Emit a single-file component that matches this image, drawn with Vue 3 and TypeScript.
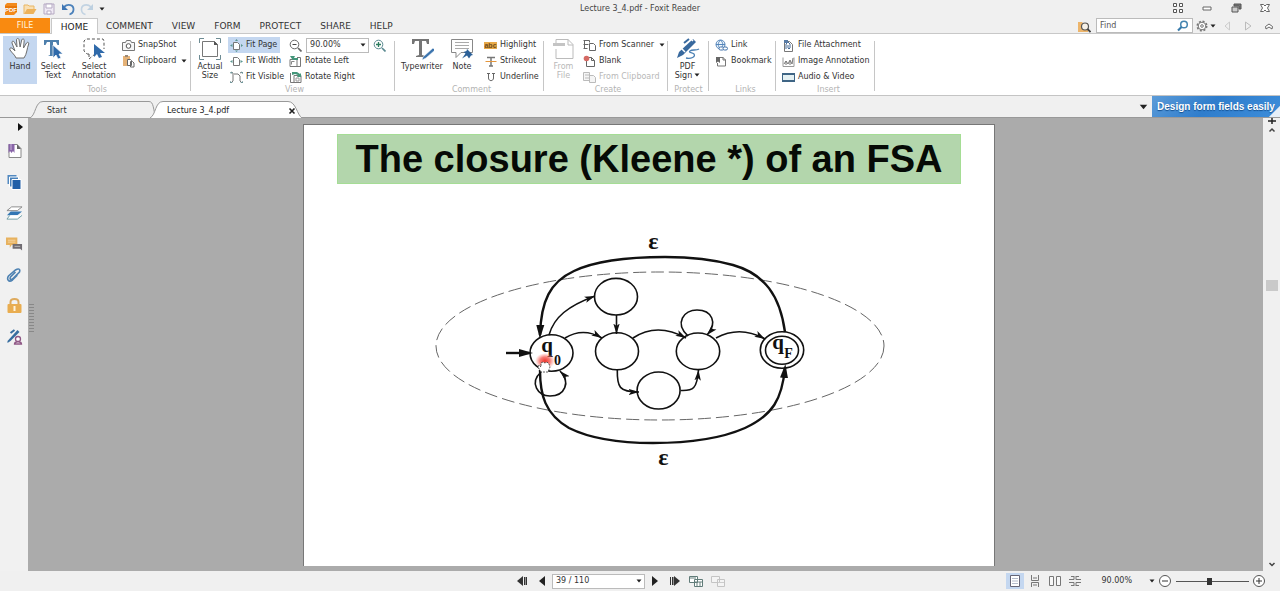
<script setup lang="ts">
import { ref } from 'vue'

interface Tool {
  label: string
  icon: string
  menu?: boolean
  active?: boolean
  disabled?: boolean
}

interface Group {
  name: string
  big: Tool[]
  small: Tool[]
}

const menus = ['HOME', 'COMMENT', 'VIEW', 'FORM', 'PROTECT', 'SHARE', 'HELP']
const activeMenu = ref('HOME')

const groups: Group[] = [
  {
    name: 'Tools',
    big: [
      { label: 'Hand', icon: 'hand', active: true },
      { label: 'Select Text', icon: 'select-text' },
      { label: 'Select Annotation', icon: 'select-annot' },
    ],
    small: [
      { label: 'SnapShot', icon: 'camera' },
      { label: 'Clipboard', icon: 'clipboard', menu: true },
    ],
  },
  {
    name: 'View',
    big: [{ label: 'Actual Size', icon: 'actual' }],
    small: [
      { label: 'Fit Page', icon: 'fit-page', active: true },
      { label: 'Fit Width', icon: 'fit-width' },
      { label: 'Fit Visible', icon: 'fit-visible' },
    ],
  },
  {
    name: 'Comment',
    big: [
      { label: 'Typewriter', icon: 'typewriter' },
      { label: 'Note', icon: 'note' },
    ],
    small: [
      { label: 'Highlight', icon: 'highlight' },
      { label: 'Strikeout', icon: 'strikeout' },
      { label: 'Underline', icon: 'underline' },
    ],
  },
  {
    name: 'Create',
    big: [{ label: 'From File', icon: 'from-file', disabled: true }],
    small: [
      { label: 'From Scanner', icon: 'scanner', menu: true },
      { label: 'Blank', icon: 'blank' },
      { label: 'From Clipboard', icon: 'from-clip', disabled: true },
    ],
  },
  { name: 'Protect', big: [{ label: 'PDF Sign', icon: 'sign', menu: true }], small: [] },
  {
    name: 'Links',
    big: [],
    small: [
      { label: 'Link', icon: 'link' },
      { label: 'Bookmark', icon: 'bookmark' },
    ],
  },
  {
    name: 'Insert',
    big: [],
    small: [
      { label: 'File Attachment', icon: 'attach' },
      { label: 'Image Annotation', icon: 'image' },
      { label: 'Audio & Video', icon: 'video' },
    ],
  },
]

const quick = [
  { label: 'Foxit Reader', icon: 'logo' },
  { label: 'Open', icon: 'open' },
  { label: 'Save', icon: 'save' },
  { label: 'Undo', icon: 'undo' },
  { label: 'Redo', icon: 'redo' },
]

const windowButtons = [
  { label: 'Layout', icon: 'grid' },
  { label: 'Minimize', icon: 'minimize' },
  { label: 'Restore', icon: 'restore' },
  { label: 'Close', icon: 'close' },
]

const panels = [
  { label: 'Bookmarks', icon: 'p-bookmark' },
  { label: 'Pages', icon: 'p-pages' },
  { label: 'Layers', icon: 'p-layers' },
  { label: 'Comments', icon: 'p-comments' },
  { label: 'Attachments', icon: 'p-clip' },
  { label: 'Security', icon: 'p-lock' },
  { label: 'Signatures', icon: 'p-sign' },
]

const layouts = [
  { label: 'Single page', icon: 'l-single' },
  { label: 'Continuous', icon: 'l-cont' },
  { label: 'Facing', icon: 'l-facing' },
  { label: 'Continuous facing', icon: 'l-cfacing' },
]

const search = ref('')
const zoom = ref(45)
</script>

<template>
  <svg class="sprite" aria-hidden="true">
    <defs>
      <symbol id="logo" viewBox="0 0 14 14"><path d="M3 1h10v9l-3 3H1V3z" fill="#f28a1c" /><path d="M1 4h12v6H1z" fill="#e87607" /><text x="7" y="9.5" font-size="6" font-weight="bold" font-family="Liberation Sans" fill="#fff" text-anchor="middle">PDF</text></symbol>
      <symbol id="open" viewBox="0 0 14 14"><path d="M1 12V3h4l1 1h5v3" fill="#f9dfb3" stroke="#e9b765" /><path d="M1 12l3-5h9.500l-3 5z" fill="#edb25b" /></symbol>
      <symbol id="save" viewBox="0 0 14 14"><path d="M2 2h10v10H2z" fill="#efe9f4" stroke="#b5a9c2" /><path d="M4 2h6v4H4zM5 9h4v3H5z" fill="#fff" stroke="#b5a9c2" /></symbol>
      <symbol id="undo" viewBox="0 0 14 14"><path d="M3 5c4-4 10-2 9.500 3-.3 2.500-2 4-4 4.500" fill="none" stroke="#4d82bb" stroke-width="1.800" /><path d="M1 2v6h6z" fill="#3f76b4" /></symbol>
      <symbol id="redo" viewBox="0 0 14 14"><path d="M11 5C7 1 1 3 1.500 8c.3 2.500 2 4 4 4.500" fill="none" stroke="#c2d3e2" stroke-width="1.600" /><path d="M13 2v6H7z" fill="#bdd0e0" /></symbol>
      <symbol id="grid" viewBox="0 0 12 12"><path d="M1.500 1.500h3v3h-3zM7.500 1.500h3v3h-3zM1.500 7.500h3v3h-3zM7.500 7.500h3v3h-3z" fill="#fff" stroke="#555" /></symbol>
      <symbol id="minimize" viewBox="0 0 12 12"><path d="M2 5h8v3H2z" fill="#fff" stroke="#666" /></symbol>
      <symbol id="restore" viewBox="0 0 12 12"><path d="M4 2h7v5H9V4H4z" fill="#777" stroke="#555" /><path d="M2 5h6v5H2z" fill="#ccc" stroke="#555" /></symbol>
      <symbol id="close" viewBox="0 0 12 12"><path d="M1.500 2.500h3L6 4l1.500-1.500h3L8.500 6l2 3.500h-3L6 8 4.500 9.500h-3l2-3.500z" fill="#fff" stroke="#666" /></symbol>
      <symbol id="hand" viewBox="0 0 24 24"><path d="M8 21c-1-3-4-5-6-8-1-2 1-3 3-1l2 2-3-8c-.6-2 1.700-2.500 2.400-.8L9 10 8.500 3c0-2 2.400-2 2.600 0l1 7 1.600-7c.5-1.800 2.700-1.300 2.500.5L15.500 11l3-5c1-1.500 2.800-.5 2.200 1-1.700 4-1.700 10-4.700 14z" fill="#fff" stroke="#6e6e6e" /></symbol>
      <symbol id="select-text" viewBox="0 0 24 24"><path d="M3 3h15v5h-1.500L15 5h-3v13l2 1H7l2-1V5H6L4.500 8H3z" fill="#4d7fac" /><path d="M12 8v13l3-3 2 4 3-1-2-4h4z" fill="#2f6aaa" stroke="#fff" stroke-width=".7" /></symbol>
      <symbol id="select-annot" viewBox="0 0 24 24"><path d="M7 17H5l-3-3V4l2-2h17l1 2v8M7 17v5l6-5" fill="none" stroke="#555" stroke-dasharray="3 2" /><path d="M12 7v13l3-3 2 4 3-1-2-4h5z" fill="#2f6aaa" /></symbol>
      <symbol id="camera" viewBox="0 0 13 13"><path d="M.5 3.500h3l1-2h4l1 2h3v8H.5z" fill="#f6f6f6" stroke="#777" /><circle cx="6.500" cy="7" r="2.300" fill="#fff" stroke="#555" /></symbol>
      <symbol id="clipboard" viewBox="0 0 13 13"><path d="M1 1h7v10H1z" fill="#e5b277" /><path d="M3 0h3v2H3z" fill="#987" /><path d="M5.500 4.500h3l1 1v5h-4zM8.500 6.500h2l1.500 1.500v4H8.500z" fill="#fff" stroke="#666" /></symbol>
      <symbol id="actual" viewBox="0 0 24 24"><path d="M1.500 6V1.500H6M18 1.500h4.500V6M22.500 18v4.500H18M6 22.500H1.500V18" fill="none" stroke="#6d8b93" /><path d="M4.500 4.500h12l3 3v12h-15z" fill="#fff" stroke="#777" /><path d="M16 4v4h4z" fill="#555" /></symbol>
      <symbol id="fit-page" viewBox="0 0 13 13"><path d="M3.500 3.500h4l2 2v5h-6z" fill="#fff" stroke="#777" /><path d="M5 2l1.500-2L8 2zM5 11.500h3L6.500 13zM2.500 5v3L0 6.500zM11 5v3l2-1.500z" fill="#5b9791" /></symbol>
      <symbol id="fit-width" viewBox="0 0 13 13"><path d="M3.500 2.500h4l2 2v6h-6z" fill="#fff" stroke="#777" /><path d="M2.500 5v3L0 6.500zM10.500 5v3l2.500-1.500z" fill="#5b9791" /></symbol>
      <symbol id="fit-visible" viewBox="0 0 13 13"><path d="M1 1l2 1v8l-2 2M12 1l-2 1M12 12l-2-2V5L8 3H4" fill="none" stroke="#777" /><path d="M0 1h3L1 3zM10 1h3v2zM0 12v-2l3 2zM13 12v-2l-3 2z" fill="#71969a" /></symbol>
      <symbol id="zoom-out" viewBox="0 0 13 13"><circle cx="5.500" cy="5.500" r="4.300" fill="#fff" stroke="#666" /><path d="M9 9l3.500 3.500" stroke="#666" stroke-width="1.700" /><path d="M3.500 5.500h4" stroke="#444" /></symbol>
      <symbol id="zoom-in" viewBox="0 0 13 13"><circle cx="5.500" cy="5.500" r="4.300" fill="#fff" stroke="#5b8a91" /><path d="M9 9l3.500 3.500" stroke="#5b8a91" stroke-width="1.700" /><path d="M3 5.500h5M5.500 3v5" stroke="#2b7d5e" stroke-width="1.300" /></symbol>
      <symbol id="rot-left" viewBox="0 0 13 13"><path d="M1 4.500h7v7H1zM8 2.500h3.500v9H8" fill="#fff" stroke="#777" /><path d="M2.500 9.500V6.500h3" fill="none" stroke="#888" /><path d="M1 1h5l-1 2h4v2H4L3 4z" fill="#44967a" /></symbol>
      <symbol id="rot-right" viewBox="0 0 13 13"><path d="M1.500 2v9.500H5M5 4.500h7v7H5z" fill="#fff" stroke="#777" /><path d="M7 10V7h3v3z" fill="none" stroke="#999" /><path d="M3 1h5l3 2 1-1v4H8l1-2-3-1-3 1z" fill="#44967a" /></symbol>
      <symbol id="typewriter" viewBox="0 0 24 24"><path d="M2 2h17v5h-2l-1-3h-4v14l3 1v1H6v-1l3-1V4H5L4 7H2z" fill="#757575" /><path d="M13 20l10-9 2 2-9 8-4 2z" fill="#3b74ae" stroke="#fff" stroke-width=".5" /></symbol>
      <symbol id="note" viewBox="0 0 24 24"><path d="M1.500 2.500h21v13H11l-5 5v-5H1.500z" fill="#fff" stroke="#888" /><path d="M5 5.500h14M5 8.500h14M5 11.500h14" stroke="#aaa" /><path d="M17 12l6 6-2 .5-2 3-2-3-5 3 3.500-5-2-1.500 3-1z" fill="#2d6198" /></symbol>
      <symbol id="highlight" viewBox="0 0 13 13"><path d="M0 3h13v7H0z" fill="#e8aa49" /><text x="6.500" y="9" font-size="7" font-family="Liberation Sans" font-weight="bold" fill="#704c1b" text-anchor="middle">abc</text></symbol>
      <symbol id="strikeout" viewBox="0 0 13 13"><path d="M3 2.500h8M7 2v9M5 11h4" stroke="#777" stroke-width="1.500" fill="none" /><path d="M1.500 6.500h11" stroke="#e5963c" /></symbol>
      <symbol id="underline" viewBox="0 0 13 13"><path d="M4.500 2v5c0 3.500 5 3.500 5 0V2M3 2.500h3M8 2.500h3" stroke="#666" fill="none" /></symbol>
      <symbol id="from-file" viewBox="0 0 24 24"><path d="M5 8V2.500h12l5 5v14H5V12" fill="#fff" stroke="#bbb" /><path d="M17 2v6h5" fill="none" stroke="#bbb" /><path d="M2 6h12v3H2z" fill="#c4c4c4" /></symbol>
      <symbol id="scanner" viewBox="0 0 13 13"><path d="M.5 1.500h6v2M.5 5.500h5M.5 9.500h4M1.500 1.500v8" fill="none" stroke="#666" /><path d="M6.500 4.500h4l2 2v5h-6z" fill="#fff" stroke="#666" /></symbol>
      <symbol id="blank" viewBox="0 0 13 13"><path d="M3.500 2.500h5l3 3v6h-8z" fill="#fff" stroke="#666" /><path d="M8.500 2.500v3h3" fill="none" stroke="#666" /><circle cx="3.500" cy="3.500" r="2.800" fill="#d56a64" /></symbol>
      <symbol id="from-clip" viewBox="0 0 13 13"><path d="M.5 1.500h6v8h-6zM6.500 4.500h4l2 2v5h-6z" fill="#f5f5f5" stroke="#bbb" /><path d="M2 4h4M2 7h4" stroke="#bbb" /></symbol>
      <symbol id="sign" viewBox="0 0 24 24"><path d="M1 21l2-6L17 2l3 3L7 18z" fill="#38699e" /><path d="M8 5l6-4 3 3M5 11l4 4" stroke="#fff" stroke-width="1.500" fill="none" /><path d="M8 6l5-4" stroke="#38699e" stroke-width="2" /><path d="M10 21c5 1 10-1 8-4-2-2-6-1-4-3 2-2 6 0 9-2" fill="none" stroke="#4a7fb3" stroke-width="1.300" /></symbol>
      <symbol id="link" viewBox="0 0 13 13"><circle cx="5.500" cy="5.500" r="4.500" fill="#eff6fc" stroke="#5586bb" /><path d="M1 5.500h9M5.500 1c-3 3-3 6 0 9M5.500 1c3 3 3 6 0 9" fill="none" stroke="#5586bb" /><rect x="4" y="8" width="5" height="3" rx="1.500" fill="#fff" stroke="#4172aa" /><rect x="8" y="8" width="4.500" height="3" rx="1.500" fill="#fff" stroke="#4172aa" /></symbol>
      <symbol id="bookmark" viewBox="0 0 13 13"><path d="M5 2.500h3l2.500 2.500v6h-8V8" fill="#fff" stroke="#777" /><path d="M1 2h4v6L3 6.500 1 8z" fill="#666" /><path d="M8 2v3h3" fill="none" stroke="#777" /></symbol>
      <symbol id="attach" viewBox="0 0 13 13"><path d="M2.500 2.500h5l3 3v7h-8z" fill="#fff" stroke="#777" /><path d="M4 10V5l2-2 2 2v4l-1 1-1-1V6" fill="none" stroke="#476c99" /><path d="M2 1h4v3H2z" fill="#587ba5" /></symbol>
      <symbol id="image" viewBox="0 0 13 13"><path d="M1 2.500v9h11v-9" fill="#fff" stroke="#999" /><path d="M2 9l2-3 2 3 2-4 2 4 1-6M4 6v4M8 6v4" stroke="#777" fill="none" /></symbol>
      <symbol id="video" viewBox="0 0 13 13"><path d="M0 2h13v9H0z" fill="#3f6585" /><path d="M1 4h11v5H1z" fill="#e5f1f3" /></symbol>
      <symbol id="find-folder" viewBox="0 0 14 14"><path d="M1 3h4l1 1h5v9H1z" fill="#edb56b" /><circle cx="8" cy="7.500" r="3.500" fill="#f6f1e8" stroke="#555" stroke-width="1.200" /><path d="M10.500 10l3 3" stroke="#444" stroke-width="1.800" /></symbol>
      <symbol id="magnify" viewBox="0 0 12 12"><circle cx="7" cy="4.500" r="3.300" fill="#fff" stroke="#4585b0" stroke-width="1.500" /><path d="M4.500 7L1 10.500" stroke="#377aab" stroke-width="2.200" /></symbol>
      <symbol id="gear" viewBox="0 0 12 12"><circle cx="6" cy="6" r="4.700" fill="none" stroke="#777" stroke-width="1.600" stroke-dasharray="2 1.690" /><circle cx="6" cy="6" r="3.800" fill="#fff" stroke="#777" /><circle cx="6" cy="6" r="1.300" fill="none" stroke="#777" /></symbol>
      <symbol id="prev" viewBox="0 0 12 12"><path d="M8.500 2v8L4 6z" fill="none" stroke="#ccc" /></symbol>
      <symbol id="next" viewBox="0 0 12 12"><path d="M3.500 2v8L9 6z" fill="none" stroke="#bbb" /></symbol>
      <symbol id="collapse" viewBox="0 0 12 12"><path d="M3 9L2.500 6.500 6 4l3.500 2.500L9 9 6 7z" fill="#fff" stroke="#666" /></symbol>
      <symbol id="down" viewBox="0 0 6 4"><path d="M.5.500h5L3 3.500z" fill="#222" /></symbol>
      <symbol id="x" viewBox="0 0 8 8"><path d="M1.500 1.500l5 5M6.500 1.500l-5 5" stroke="#222" stroke-width="1.600" /></symbol>
      <symbol id="p-bookmark" viewBox="0 0 16 16"><path d="M2.500 1.500h8l4 4v9h-12z" fill="#fff" stroke="#888" /><path d="M10.500 1v5h4z" fill="#666" /><path d="M2 1h6v9L6.500 8 5 10 3.500 8 2 10z" fill="#8864a8" /><path d="M4 1h1v6H4z" fill="#c7b4d8" /></symbol>
      <symbol id="p-pages" viewBox="0 0 16 16"><path d="M1 1h9v9H1z" fill="#5289c0" /><path d="M3 3h9v10H3z" fill="#4780ba" stroke="#fff" /><path d="M5.500 5.500h9v10h-9z" fill="#205fa8" stroke="#fff" /></symbol>
      <symbol id="p-layers" viewBox="0 0 18 16"><path d="M6 1.500h11l-5 4H1z" fill="#fff" stroke="#888" /><path d="M5 6.500h12l-5 4H1z" fill="#3377b4" /><path d="M4 10.500L1 14.500h11l5-4" fill="#fff" stroke="#6c9ca3" /></symbol>
      <symbol id="p-comments" viewBox="0 0 18 16"><path d="M0 1h12v8H6l-2 3V9H0z" fill="#e7b25f" /><path d="M2 4h8M2 6h8" stroke="#f6d7a3" /><path d="M7 8h10v7l-2-2H7z" fill="#706c72" /><path d="M9 10.500h6" stroke="#bbb" /></symbol>
      <symbol id="p-clip" viewBox="0 0 16 16"><path d="M9 5l-5 5c-1 2 0 3 2 2l7-7c1-3-1-4-4-2L2 9c-2 3 0 7 4 4l5-5" fill="none" stroke="#4e82b2" stroke-width="1.600" /></symbol>
      <symbol id="p-lock" viewBox="0 0 16 16"><path d="M4 7V4c0-4 8-4 8 0v3" fill="none" stroke="#deaa5d" stroke-width="2" /><rect x="1" y="6" width="14" height="9" rx="1" fill="#e9ad50" /><path d="M7 8h2v5H7z" fill="#fff3dc" /></symbol>
      <symbol id="p-sign" viewBox="0 0 16 16"><path d="M1 12L11 1l2 2-9 9-3 2z" fill="#376d9f" /><path d="M4 4l4-3" stroke="#376d9f" stroke-width="2" /><circle cx="11.500" cy="10" r="2.500" fill="#fff" stroke="#8e5684" stroke-width="1.300" /><path d="M8 15c0-3 7-3 7 0z" fill="#fff" stroke="#8e5684" stroke-width="1.300" /></symbol>
      <symbol id="first" viewBox="0 0 12 12"><path d="M7 1v10L1 6z" fill="#333" /><path d="M8 2h1.500v8H8zM10 2h1v8h-1z" fill="#333" /></symbol>
      <symbol id="back" viewBox="0 0 12 12"><path d="M9 1v10L3 6z" fill="#222" /></symbol>
      <symbol id="forward" viewBox="0 0 12 12"><path d="M3 1v10l6-5z" fill="#222" /></symbol>
      <symbol id="last" viewBox="0 0 12 12"><path d="M5 1v10l6-5z" fill="#333" /><path d="M1 2h1v8H1zM3 2h1.500v8H3z" fill="#333" /></symbol>
      <symbol id="view-prev" viewBox="0 0 14 12"><path d="M.5 1.500h8v6h-8zM5.500 4.500h8v7h-8z" fill="#fff" stroke="#607b78" /><path d="M6 7h7M8 7v4M11 7v4M1 3h6" stroke="#68817f" /></symbol>
      <symbol id="view-next" viewBox="0 0 14 12"><path d="M.5 1.500h8v6h-8zM6.500 4.500h7v7h-7z" fill="#f4f4f4" stroke="#c4c4c4" /><path d="M7 7.500h6" stroke="#ccc" /></symbol>
      <symbol id="l-single" viewBox="0 0 14 14"><path d="M2.500 1.500h9v11h-9z" fill="#fff" stroke="#667" /><path d="M4 4.500h6M4 7h6M4 9.500h6" stroke="#b5bccb" /></symbol>
      <symbol id="l-cont" viewBox="0 0 14 14"><path d="M3.500 1v5.500h7V1M3.500 13V8.500h7V13M5 4h4M5 11h4" fill="none" stroke="#777" /></symbol>
      <symbol id="l-facing" viewBox="0 0 14 14"><path d="M1.500 2.500h4v9h-4zM8.500 2.500h4v9h-4z" fill="#f8f8f8" stroke="#777" /></symbol>
      <symbol id="l-cfacing" viewBox="0 0 14 14"><path d="M1 5.500h5V2M13 5.500H8V2M1 8.500h5V12M13 8.500H8V12M3 2.500h3M8 2.500h3M3 11.500h3M8 11.500h3" fill="none" stroke="#777" /></symbol>
      <symbol id="minus-c" viewBox="0 0 14 14"><circle cx="7" cy="7" r="5.500" fill="#fff" stroke="#555" /><path d="M4 7h6" stroke="#333" /></symbol>
      <symbol id="plus-c" viewBox="0 0 14 14"><circle cx="7" cy="7" r="5.500" fill="#fff" stroke="#555" /><path d="M4 7h6M7 4v6" stroke="#333" /></symbol>
    </defs>
  </svg>

  <div class="app">
    <header class="titlebar">
      <div class="quick">
        <button v-for="q in quick" :key="q.icon" :aria-label="q.label"><svg class="i14"><use :href="'#' + q.icon" /></svg></button>
        <button aria-label="Customize"><svg class="caret"><use href="#down" /></svg></button>
      </div>
      <div class="title">Lecture 3_4.pdf - Foxit Reader</div>
      <div class="window">
        <button v-for="w in windowButtons" :key="w.icon" :aria-label="w.label"><svg class="i12"><use :href="'#' + w.icon" /></svg></button>
      </div>
    </header>

    <nav class="menubar">
      <button class="file">FILE</button>
      <button v-for="m in menus" :key="m" class="menu" :class="{ on: m === activeMenu }" @click="activeMenu = m">{{ m }}</button>
      <div class="find">
        <button aria-label="Search folder"><svg class="i14"><use href="#find-folder" /></svg></button>
        <label class="findbox">
          <input v-model="search" type="text" placeholder="Find" aria-label="Find" />
          <svg class="i12"><use href="#magnify" /></svg>
        </label>
        <button class="gear" aria-label="Settings"><svg class="i12"><use href="#gear" /></svg><svg class="caret"><use href="#down" /></svg></button>
        <button aria-label="Previous"><svg class="i12"><use href="#prev" /></svg></button>
        <button aria-label="Next"><svg class="i12"><use href="#next" /></svg></button>
        <button aria-label="Collapse ribbon"><svg class="i12"><use href="#collapse" /></svg></button>
      </div>
    </nav>

    <section class="ribbon">
      <div v-for="g in groups" :key="g.name" class="group" :class="g.name.toLowerCase()">
        <div class="tools-row">
          <button v-for="b in g.big" :key="b.label" class="big" :class="[b.icon, { active: b.active }]" :disabled="b.disabled">
            <svg class="i24"><use :href="'#' + b.icon" /></svg>
            <span>{{ b.label }}<svg v-if="b.menu" class="caret"><use href="#down" /></svg></span>
          </button>
          <div v-if="g.small.length" class="col">
            <button v-for="s in g.small" :key="s.label" class="small" :class="{ active: s.active }" :disabled="s.disabled">
              <svg class="i13"><use :href="'#' + s.icon" /></svg>{{ s.label }}<svg v-if="s.menu" class="caret"><use href="#down" /></svg>
            </button>
          </div>
          <div v-if="g.name === 'View'" class="col zoomcol">
            <div class="zoomrow">
              <button aria-label="Zoom out"><svg class="i13"><use href="#zoom-out" /></svg></button>
              <div class="combo">
                <select aria-label="Zoom level"><option>90.00%</option></select>
                <svg class="caret"><use href="#down" /></svg>
              </div>
              <button aria-label="Zoom in"><svg class="i13"><use href="#zoom-in" /></svg></button>
            </div>
            <button class="small"><svg class="i13"><use href="#rot-left" /></svg>Rotate Left</button>
            <button class="small"><svg class="i13"><use href="#rot-right" /></svg>Rotate Right</button>
          </div>
        </div>
        <div class="gname">{{ g.name }}</div>
      </div>
    </section>

    <div class="doctabs">
      <button class="doctab">
        <svg class="shape" viewBox="0 0 126 17"><path d="M0 17C6 14 5 .5 13 .5H119C124 .5 123 9 126 17" fill="#f0f0f0" stroke="#999" /></svg>
        <span>Start</span>
      </button>
      <div class="doctab current">
        <svg class="shape" viewBox="0 0 152 17"><path d="M0 17C6 14 5 .5 13 .5H138C146 .5 147 14 152 17" fill="#fff" stroke="#999" /></svg>
        <span>Lecture 3_4.pdf</span>
        <button aria-label="Close tab"><svg class="i8"><use href="#x" /></svg></button>
      </div>
      <button class="tablist" aria-label="Open tabs"><svg class="tri"><use href="#down" /></svg></button>
      <a class="promo" href="#forms">Design form fields easily</a>
    </div>

    <main class="work">
      <aside class="side">
        <button class="expand" aria-label="Expand panel"><svg viewBox="0 0 5 8"><path d="M0 0v8l5-4z" fill="#111" /></svg></button>
        <button v-for="p in panels" :key="p.icon" class="panel" :aria-label="p.label"><svg><use :href="'#' + p.icon" /></svg></button>
      </aside>
      <div class="gutter"><i></i></div>
      <div class="canvas">
        <article class="page">
          <h1>The closure (Kleene *) of an FSA</h1>
          <svg class="diagram" viewBox="303 183 692 382" role="img" aria-label="Finite state automaton with epsilon transitions">
            <defs>
              <radialGradient id="spot"><stop offset="0" stop-color="#f0352c" /><stop offset=".5" stop-color="#f4655d" stop-opacity=".85" /><stop offset="1" stop-color="#ff8a80" stop-opacity="0" /></radialGradient>
              <marker id="head" viewBox="0 0 11 8" refX="10.500" refY="4" markerWidth="11" markerHeight="8" markerUnits="userSpaceOnUse" orient="auto"><path d="M0 .8L10.500 4 0 7.200 2.500 4z" fill="#111" /></marker>
              <marker id="bighead" viewBox="0 0 14 9" refX="10" refY="4.500" markerWidth="14" markerHeight="9" markerUnits="userSpaceOnUse" orient="auto"><path d="M0 .5L14 4.500 0 8.500z" fill="#111" /></marker>
            </defs>
            <ellipse cx="660" cy="345" rx="224" ry="74" fill="none" stroke="#666" stroke-width="1" stroke-dasharray="13 5" />
            <g fill="none" stroke="#111" stroke-width="1.600">
              <ellipse cx="551.500" cy="352" rx="21.500" ry="18.300" />
              <ellipse cx="616" cy="295.700" rx="21.500" ry="18.300" />
              <ellipse cx="617" cy="350.200" rx="21.500" ry="18.500" />
              <ellipse cx="658.600" cy="389.500" rx="21.500" ry="18.500" />
              <ellipse cx="698" cy="350.300" rx="21.700" ry="18.300" />
              <ellipse cx="782" cy="349" rx="21.700" ry="18.300" />
              <ellipse cx="782" cy="349.300" rx="16.500" ry="14" />
              <g marker-end="url(#head)">
                <path d="M549 334C554 316 568 305 595 295" />
                <path d="M565 337Q583 326 602 337" />
                <path d="M616.500 314V333" />
                <path d="M633 337Q657 321 686 337" />
                <path d="M716 337Q740 324 765 338" />
                <path d="M617.300 369C617 386 619 391 639 391" />
                <path d="M681 389.500C693 390 697 388 698.500 369" />
                <path d="M688 335C674 322 684 309 697 309C712 309 718 322 707 334" />
                <path d="M541 371C529 382 538 395 550 395C565 395 571 381 560 370" />
              </g>
            </g>
            <g fill="none" stroke="#111" stroke-width="2.400" marker-end="url(#bighead)">
              <path d="M785 331C780 295 765 273 733 264C710 257.500 690 256 665 256C625 256 595 260 574 270C550 281 541 300 540 334" />
              <path d="M540 369C540 394 545 413 569 427C591 438 620 442 653 442C690 442 720 438 745 427C773 414 782 398 785 367" />
              <path d="M506 352H529" />
            </g>
            <g font-family="Liberation Serif, serif" font-weight="bold" fill="#111" text-anchor="middle">
              <text x="653.500" y="248" font-size="24">ε</text>
              <text x="663.500" y="464" font-size="24">ε</text>
              <text x="547" y="351" font-size="21">q</text>
              <text x="557.500" y="364" font-size="14">0</text>
              <text x="778" y="348" font-size="21">q</text>
              <text x="788.500" y="357" font-size="14">F</text>
            </g>
            <ellipse cx="545" cy="360" rx="10" ry="8" fill="url(#spot)" />
            <path d="M541 371l-3-5 1-2 2 2v-4l2-1 2 1 2-1 2 2 1 3-2 5z" fill="#fff" stroke="#333" stroke-width=".8" stroke-dasharray="2 1" />
          </svg>
        </article>
      </div>
      <div class="scroll">
        <svg class="split" viewBox="0 0 10 16"><path d="M1 3h8M5 0v6" stroke="#222" stroke-width="1.500" /><path d="M2.500 13.500L5 11l2.500 2.500" fill="none" stroke="#444" stroke-width="1.500" /></svg>
        <div class="track"><div class="thumb"></div></div>
        <svg class="end" viewBox="0 0 10 6"><path d="M2.500 1L5 3.500 7.500 1" fill="none" stroke="#444" stroke-width="1.500" /></svg>
      </div>
    </main>

    <footer class="status">
      <div class="pager">
        <button aria-label="First page"><svg class="i12"><use href="#first" /></svg></button>
        <button aria-label="Previous page"><svg class="i12"><use href="#back" /></svg></button>
        <div class="combo pagecombo">
          <select aria-label="Page"><option>39 / 110</option></select>
          <svg class="caret"><use href="#down" /></svg>
        </div>
        <button aria-label="Next page"><svg class="i12"><use href="#forward" /></svg></button>
        <button aria-label="Last page"><svg class="i12"><use href="#last" /></svg></button>
        <button aria-label="Previous view"><svg class="i14"><use href="#view-prev" /></svg></button>
        <button aria-label="Next view"><svg class="i14"><use href="#view-next" /></svg></button>
      </div>
      <div class="right">
        <button v-for="(l, i) in layouts" :key="l.icon" class="layout" :class="{ active: i === 0 }" :aria-label="l.label"><svg class="i14"><use :href="'#' + l.icon" /></svg></button>
        <button class="percent">90.00%<svg class="caret"><use href="#down" /></svg></button>
        <button aria-label="Zoom out"><svg class="i14"><use href="#minus-c" /></svg></button>
        <input v-model="zoom" class="slider" type="range" min="0" max="100" aria-label="Zoom" />
        <button aria-label="Zoom in"><svg class="i14"><use href="#plus-c" /></svg></button>
      </div>
    </footer>
  </div>
</template>

<style>
body {
  margin: 0;
  overflow: hidden;
}
</style>

<style scoped>
.sprite {
  position: absolute;
  width: 0;
  height: 0;
}
.app {
  display: flex;
  flex-direction: column;
  height: 100vh;
  background: #f0f0f0;
  color: #333;
  font: 8px/10px "DejaVu Sans", sans-serif;
}
button {
  display: flex;
  align-items: center;
  justify-content: center;
  box-sizing: border-box;
  padding: 0;
  border: 0;
  background: none;
  color: inherit;
  font: inherit;
}
svg {
  display: block;
  flex: none;
}
.i8 { width: 8px; height: 8px; }
.i12 { width: 12px; height: 12px; }
.i13 { width: 13px; height: 13px; }
.i14 { width: 14px; height: 14px; }
.i24 { width: 24px; height: 24px; }
.caret { width: 6px; height: 4px; }

.titlebar {
  display: grid;
  grid-template-columns: 1fr auto 1fr;
  align-items: center;
  height: 18px;
}
.quick {
  display: flex;
  gap: 5px;
  padding-left: 4px;
}
.title {
  color: #444;
}
.window {
  display: flex;
  justify-content: flex-end;
  gap: 17px;
  padding: 0 9px 3px 0;
}

.menubar {
  display: flex;
  align-items: stretch;
  box-sizing: border-box;
  gap: 1px;
  height: 16px;
  font-size: 9px;
  border-bottom: 1px solid #c8c8c8;
}
.file {
  width: 50px;
  background: #f98a10;
  color: #fff4df;
  font-size: 8px;
}
.menu {
  padding: 0 9px;
}
.menu.on {
  width: 47px;
  margin: 0 -2px -1px 0;
  padding: 0;
  background: #fff;
  border: 1px solid #c8c8c8;
  border-bottom: 0;
  color: #222;
}
.find {
  display: flex;
  align-items: center;
  gap: 9px;
  margin-left: auto;
  padding-right: 5px;
}
.findbox {
  display: flex;
  align-items: center;
  box-sizing: border-box;
  width: 97px;
  height: 15px;
  margin-left: -4px;
  padding: 0 3px;
  background: #fff;
  border: 1px solid #bbb;
}
.findbox input {
  flex: 1;
  min-width: 0;
  padding: 0;
  border: 0;
  outline: 0;
  background: none;
  font: 8px/10px "DejaVu Sans", sans-serif;
}
.findbox input::placeholder {
  color: #555;
}
.gear {
  gap: 2px;
  margin: 0 -4px 0 -6px;
}

.ribbon {
  display: flex;
  box-sizing: border-box;
  height: 62px;
  background: #fff;
  border-bottom: 1px solid #c4c4c4;
}
.group {
  display: flex;
  flex-direction: column;
  box-sizing: border-box;
  padding-top: 2px;
  background: linear-gradient(#c6c6c6, #c6c6c6) right 7px / 1px 50px no-repeat;
}
.tools-row {
  display: flex;
  height: 50px;
}
.col {
  padding-top: 1px;
}
.gname {
  color: #b3b3b3;
  line-height: 10px;
  text-align: center;
}
.tools { width: 191px; padding-left: 3px; }
.view { width: 204px; padding-left: 3px; }
.comment { width: 149px; padding-left: 4px; }
.create { width: 124px; padding-left: 4px; }
.protect { width: 41px; }
.links { width: 67px; padding-left: 6px; }
.insert { width: 99px; padding-left: 6px; }
.big {
  flex-direction: column;
  justify-content: flex-start;
  width: 32px;
  height: 48px;
  padding-top: 1px;
  gap: 1px;
  line-height: 9px;
}
.big span .caret {
  display: inline-block;
  margin: 0 0 1px 2px;
}
.big.hand { width: 34px; }
.big.select-annot { width: 50px; margin-right: 3px; }
.big.typewriter { width: 46px; }
.big.note { width: 34px; margin-right: 5px; }
.big.from-file { margin-right: 4px; }
.big.sign { width: 39px; padding: 1px 5px 0; }
.big.actual { margin-right: 2px; }
.active {
  background: #c4d7f0;
}
button:disabled {
  color: #b8b8b8;
}
.small {
  justify-content: flex-start;
  height: 16px;
  gap: 3px;
  padding-right: 3px;
  white-space: nowrap;
}
.small .caret {
  margin-left: 2px;
}
.view .col:not(.zoomcol) .small {
  padding-left: 2px;
}
.zoomcol {
  margin-left: 2px;
}
.zoomrow {
  display: flex;
  align-items: center;
  gap: 4px;
  height: 16px;
}
.combo {
  position: relative;
  display: flex;
  align-items: center;
}
.combo select {
  appearance: none;
  box-sizing: border-box;
  width: 63px;
  height: 15px;
  padding: 0 3px;
  border: 1px solid #bbb;
  border-radius: 0;
  background: #fff;
  color: #333;
  font: inherit;
}
.combo .caret {
  position: absolute;
  right: 3px;
  pointer-events: none;
}

.doctabs {
  display: flex;
  align-items: flex-end;
  height: 21px;
  padding-left: 30px;
  border-bottom: 1px solid #999;
}
.doctab {
  position: relative;
  display: flex;
  align-items: center;
  justify-content: flex-start;
  box-sizing: border-box;
  width: 120px;
  height: 16px;
  padding: 4px 0 0 17px;
}
.doctab.current {
  justify-content: space-between;
  width: 152px;
  padding-right: 6px;
  color: #222;
}
.shape {
  position: absolute;
  inset: 0 auto auto 0;
  height: 17px;
}
.doctab span,
.doctab button {
  position: relative;
}
.tablist {
  height: 20px;
  margin-left: auto;
}
.tri {
  width: 9px;
  height: 6px;
}
.promo {
  box-sizing: border-box;
  width: 128px;
  height: 21px;
  margin-left: 4px;
  background: linear-gradient(135deg, #5b9bd8, #2f7dcc 45%, #3b8bd8 92%, #e6eef7 93%);
  color: #fff;
  font: bold 10px/21px "Liberation Sans", sans-serif;
  text-align: center;
  text-decoration: none;
  text-shadow: 0 1px 1px #124e8f;
  white-space: nowrap;
}

.work {
  display: flex;
  flex: 1;
  min-height: 0;
  background: #ababab;
}
.side {
  display: flex;
  flex-direction: column;
  align-items: center;
  width: 28px;
  background: #f1f1f1;
}
.expand {
  height: 17px;
  padding-left: 12px;
}
.expand svg {
  width: 5px;
  height: 8px;
}
.panel {
  width: 28px;
  height: 31px;
}
.panel svg {
  width: 17px;
  height: 16px;
}
.gutter {
  display: flex;
  align-items: center;
  width: 7px;
}
.gutter i {
  width: 5px;
  height: 30px;
  margin: 0 0 52px 1px;
  background: repeating-linear-gradient(#888 0 1px, transparent 1px 3px);
}
.canvas {
  display: flex;
  flex: 1;
  justify-content: center;
  min-width: 0;
  padding: 6px 0 5px;
}
.page {
  display: flex;
  flex-direction: column;
  width: 692px;
  box-sizing: border-box;
  border: 1px solid #777;
  border-width: 1px 1px 0;
  background: #fff;
  overflow: hidden;
}
h1 {
  margin: 9px 33px 0;
  box-sizing: border-box;
  border: 1px solid #a5dd95;
  background: #b3d6ac;
  color: #060a06;
  font: bold 38px/48px "Liberation Sans", sans-serif;
  text-align: center;
  white-space: nowrap;
}
.diagram {
  width: 692px;
  height: 382px;
  margin-left: -1px;
}
.scroll {
  display: flex;
  flex-direction: column;
  align-items: center;
  width: 17px;
  background: #f0f0f0;
}
.split {
  width: 10px;
  height: 16px;
}
.track {
  flex: 1;
  width: 12px;
}
.thumb {
  height: 11px;
  margin-top: 146px;
  background: #c9c9c9;
}
.end {
  width: 10px;
  height: 6px;
  margin-bottom: 3px;
}

.status {
  display: flex;
  align-items: center;
  justify-content: space-between;
  height: 20px;
  padding: 0 14px 0 516px;
}
.pager,
.right {
  display: flex;
  align-items: center;
}
.pager {
  gap: 8px;
}
.pagecombo {
  margin: 0 -4px 0 -4px;
}
.pagecombo select {
  width: 93px;
}
.layout {
  width: 18px;
  height: 16px;
  margin-right: 2px;
}
.percent {
  gap: 17px;
  margin: 0 3px 0 15px;
}
.slider {
  appearance: none;
  width: 73px;
  height: 12px;
  margin: 0 3px 0 4px;
  background: linear-gradient(#555, #555) center / 100% 1px no-repeat;
}
.slider::-webkit-slider-thumb {
  appearance: none;
  width: 5px;
  height: 7px;
  background: #333;
}
</style>
